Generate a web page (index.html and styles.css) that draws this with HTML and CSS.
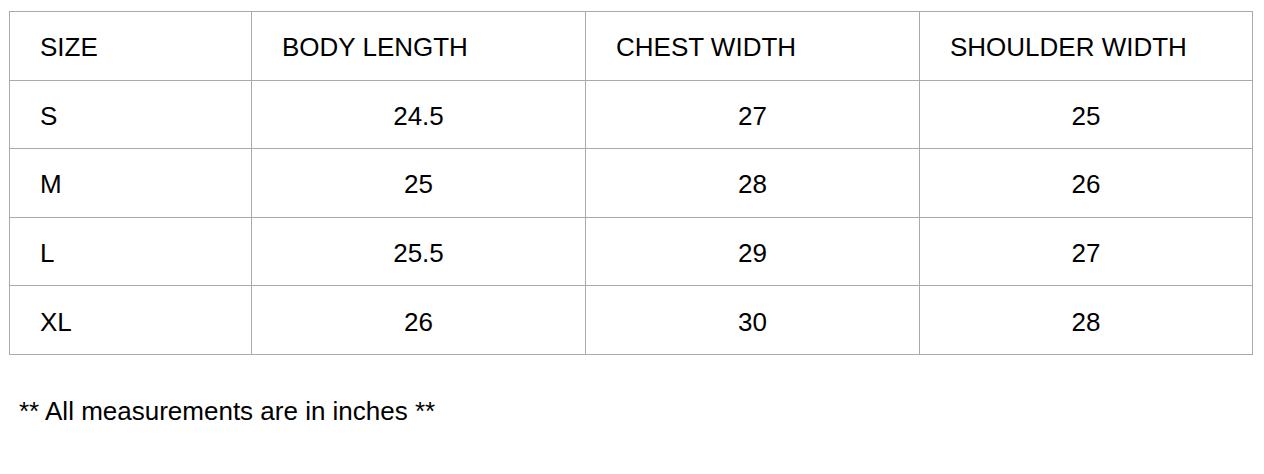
FILE: index.html
```html
<!DOCTYPE html>
<html>
<head>
<meta charset="utf-8">
<link rel="stylesheet" href="styles.css">
</head>
<body>
<div class="page">
  <table class="size-table">
    <colgroup>
      <col class="c1"><col class="c2"><col class="c3"><col class="c4">
    </colgroup>
    <thead>
      <tr><th>SIZE</th><th>BODY LENGTH</th><th>CHEST WIDTH</th><th>SHOULDER WIDTH</th></tr>
    </thead>
    <tbody>
      <tr><td>S</td><td>24.5</td><td>27</td><td>25</td></tr>
      <tr><td>M</td><td>25</td><td>28</td><td>26</td></tr>
      <tr><td>L</td><td>25.5</td><td>29</td><td>27</td></tr>
      <tr><td>XL</td><td>26</td><td>30</td><td>28</td></tr>
    </tbody>
  </table>
  <p class="note">** All measurements are in inches **</p>
</div>
</body>
</html>
```
FILE: styles.css
```css
html, body {
  margin: 0;
  padding: 0;
  background: #ffffff;
}
.page {
  padding: 11px 0 0 9px;
  font-family: "Liberation Sans", Arial, sans-serif;
  color: #000;
}
.size-table {
  border-collapse: collapse;
  width: 1243px;
  table-layout: fixed;
  font-size: 26px;
}
.c1 { width: 242px; }
.c2 { width: 334px; }
.c3 { width: 334px; }
.c4 { width: 333px; }
.size-table th,
.size-table td {
  border: 1px solid #aaaaaa;
  height: 68.6px;
  padding: 4px 0 0 30px;
  vertical-align: middle;
  font-weight: normal;
  text-align: left;
  box-sizing: border-box;
}
.size-table td {
  text-align: center;
  padding: 4px 0 0 0;
}
.size-table td:first-child {
  text-align: left;
  padding-left: 30px;
}
.note {
  margin: 41px 0 0 10px;
  font-size: 26px;
}
```
